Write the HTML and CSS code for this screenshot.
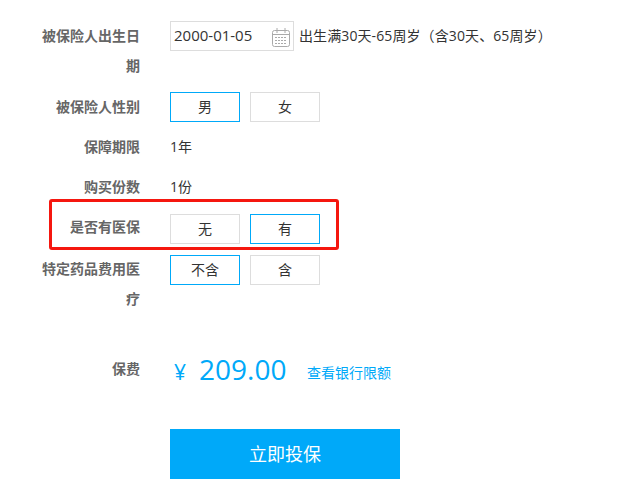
FILE: index.html
```html
<!DOCTYPE html>
<html lang="zh-CN">
<head>
<meta charset="UTF-8">
<title>保费试算</title>
<link rel="stylesheet" href="styles.css">
</head>
<body>
<div class="form">
    <div class="row row-first">
        <div class="label">被保险人出生日期</div>
        <div class="date-input">
            <span class="date-value">2000-01-05</span>
            <svg class="calendar" width="18" height="19" viewBox="0 0 18 19" fill="none" stroke="#aaa" stroke-width="1">
                <rect x="0.5" y="2.5" width="17" height="16" rx="2"/>
                <path d="M5 0v5M13 0v5M1 6.5h16"/>
                <path d="M3 9.5h12M3 12.5h12M3 15.5h12" stroke-dasharray="2 1"/>
            </svg>
        </div>
        <div class="hint">出生满30天-65周岁（含30天、65周岁）</div>
    </div>
    <div class="row">
        <div class="label">被保险人性别</div>
        <div class="options">
            <div class="option active">男</div>
            <div class="option">女</div>
        </div>
    </div>
    <div class="row">
        <div class="label">保障期限</div>
        <div class="value">1年</div>
    </div>
    <div class="row">
        <div class="label">购买份数</div>
        <div class="value">1份</div>
    </div>
    <div class="row">
        <div class="label">是否有医保</div>
        <div class="options options-low">
            <div class="option">无</div>
            <div class="option active">有</div>
        </div>
    </div>
    <div class="row">
        <div class="label">特定药品费用医疗</div>
        <div class="options options-mid">
            <div class="option active">不含</div>
            <div class="option">含</div>
        </div>
    </div>
    <div class="row row-price">
        <div class="label">保费</div>
        <div class="price">
            <span class="currency">¥</span>
            <span class="amount">209.00</span>
            <a class="bank-link">查看银行限额</a>
        </div>
    </div>
    <div class="submit">立即投保</div>
    <div class="highlight"></div>
</div>
</body>
</html>
```

FILE: styles.css
```css
body {
    margin: 0;
    background-color: #fff;
    font-family: "Open Sans", "Noto Sans CJK SC", sans-serif;
    font-size: 14px;
    color: #333;
}

.form {
    position: relative;
    height: 501px;
    padding-top: 21px;
    box-sizing: border-box;
    overflow: hidden;
}

.row {
    display: flex;
    margin-bottom: 10px;
}

.row-first {
    margin-bottom: 11px;
}

.row-price {
    margin-top: 40px;
    margin-bottom: 0;
}

.label {
    width: 100px;
    margin-left: 40px;
    margin-right: 30px;
    line-height: 30px;
    text-align: right;
    font-weight: 700;
    color: #666;
}

.date-input {
    width: 124px;
    height: 30px;
    box-sizing: border-box;
    border: 1px solid #ddd;
    padding-left: 3px;
    display: flex;
    align-items: center;
    justify-content: space-between;
    padding-right: 3px;
}

.date-value {
    font-size: 15px;
    line-height: 27px;
    margin-bottom: 1px;
}

.calendar {
    margin-top: 2px;
}

.hint {
    margin-left: 5px;
    line-height: 30px;
    letter-spacing: 0.1px;
    color: #333;
}

.options {
    display: flex;
    gap: 10px;
}

.options-low {
    margin-top: 2px;
}

.options-mid {
    margin-top: 1px;
}

.option {
    width: 70px;
    height: 30px;
    box-sizing: border-box;
    border: 1px solid #ddd;
    line-height: 28px;
    text-align: center;
}

.option.active {
    border-color: #00a9f9;
}

.value {
    line-height: 30px;
}

.price {
    display: flex;
    align-items: center;
    color: #00a9f9;
    height: 30px;
}

.currency {
    font-size: 21px;
    width: 25px;
    padding-left: 4px;
    padding-top: 6px;
}

.amount {
    font-size: 28px;
    width: 108px;
}

.bank-link {
    padding-top: 6px;
    color: #00a9f9;
}

.submit {
    width: 230px;
    height: 50px;
    margin-top: 45px;
    margin-left: 170px;
    background-color: #00a9f9;
    color: #fff;
    font-size: 18px;
    line-height: 50px;
    text-align: center;
}

.highlight {
    position: absolute;
    left: 49px;
    top: 199px;
    width: 290px;
    height: 51px;
    box-sizing: border-box;
    border: 3px solid #f5170f;
    border-radius: 3px;
}
```
